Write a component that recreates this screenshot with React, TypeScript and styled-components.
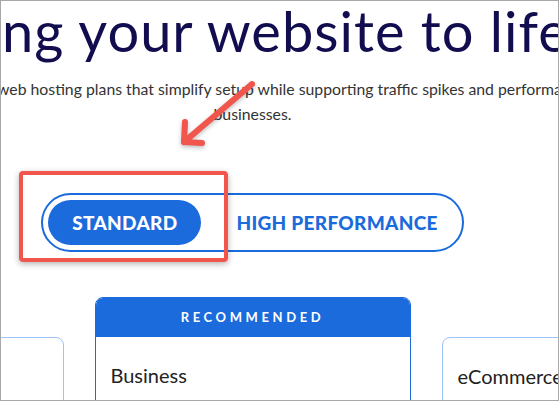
import React from "react";
import styled, { createGlobalStyle } from "styled-components";

const GlobalStyle = createGlobalStyle`
  * { box-sizing: border-box; }
  body {
    margin: 0;
    background: #fff;
    font-family: Lato, "Noto Sans", sans-serif;
  }
`;

const Frame = styled.div`
  position: relative;
  width: 559px;
  height: 401px;
  border: 1px solid #a8a8a8;
  overflow: hidden;
  background: #fff;
`;

const Column = styled.div`
  width: 503px;
  display: flex;
  flex-direction: column;
  align-items: center;
`;

const Heading = styled.h1`
  align-self: flex-start;
  margin: 0 0 0 1px;
  font-family: Lato, sans-serif;
  font-weight: 400;
  font-size: 56px;
  letter-spacing: 1px;
  line-height: 60px;
  color: #110d4e;
  white-space: nowrap;
`;

const Subtitle = styled.div`
  align-self: stretch;
  margin-top: 15px;
  font-family: Lato, sans-serif;
  font-size: 15.8px;
  line-height: 25px;
  color: #333;
  display: flex;
  flex-direction: column;
`;

const SubLine = styled.span<{ $centered?: boolean }>`
  white-space: nowrap;
  margin-left: ${({ $centered }) => ($centered ? "0" : "-4px")};
  text-align: ${({ $centered }) => ($centered ? "center" : "left")};
`;

const Toggle = styled.div`
  margin-top: 67px;
  display: flex;
  align-items: center;
  padding: 5px;
  border: 2px solid #1b6bdc;
  border-radius: 30px;
`;

const ToggleButton = styled.div<{ $active?: boolean }>`
  height: 45px;
  display: flex;
  align-items: center;
  border-radius: 23px;
  padding: ${({ $active }) => ($active ? "0 24px" : "0 19px 0 35px")};
  background: ${({ $active }) => ($active ? "#1b6bdc" : "transparent")};
  color: ${({ $active }) => ($active ? "#fff" : "#1b6bdc")};
  font-family: Lato, sans-serif;
  font-weight: 900;
  font-size: 19px;
  letter-spacing: 0.3px;
  white-space: nowrap;
`;

const Cards = styled.div`
  margin-top: 45px;
  display: flex;
  align-items: flex-start;
  gap: 31px;
`;

const Card = styled.div<{ $featured?: boolean }>`
  flex: 0 0 316px;
  margin-top: ${({ $featured }) => ($featured ? "0" : "40px")};
  height: 140px;
  display: flex;
  flex-direction: column;
  border: 1px solid ${({ $featured }) => ($featured ? "#1b6bdc" : "#9cc4f6")};
  border-radius: 8px;
  overflow: hidden;
`;

const CardBanner = styled.div`
  height: 40px;
  margin: -1px -1px 0;
  display: flex;
  align-items: center;
  justify-content: center;
  background: #1b6bdc;
  color: #fff;
  font-family: Lato, sans-serif;
  font-weight: 700;
  font-size: 13px;
  letter-spacing: 3.6px;
`;

const CardTitle = styled.div`
  padding: 26px 15px 0;
  font-family: Lato, sans-serif;
  font-size: 20px;
  line-height: 24px;
  color: #222;
  white-space: nowrap;
`;

const Highlight = styled.div`
  position: absolute;
  left: 18px;
  top: 170px;
  width: 209px;
  height: 91px;
  border: 4px solid #f0564c;
  border-radius: 4px;
  box-shadow: 0 2px 6px rgba(0, 0, 0, 0.3);
  pointer-events: none;
`;

const ArrowLayer = styled.svg`
  position: absolute;
  left: 0;
  top: 0;
  pointer-events: none;
  filter: drop-shadow(0 2px 2px rgba(0, 0, 0, 0.25));
`;

const Arrow: React.FC = () => (
  <ArrowLayer width={558} height={401} viewBox="0 0 558 401">
    <g stroke="#f0564c" strokeWidth={6} strokeLinecap="round" strokeLinejoin="round" fill="none">
      <line x1={251} y1={83} x2={183} y2={141} />
      <polyline points="184,121 183,141 201,142" />
    </g>
  </ArrowLayer>
);

export default function App() {
  return (
    <Frame>
      <GlobalStyle />
      <Column>
        <Heading>ng your website to life</Heading>
        <Subtitle>
          <SubLine>web hosting plans that simplify setup while supporting traffic spikes and performance needs of growing</SubLine>
          <SubLine $centered>businesses.</SubLine>
        </Subtitle>
        <Toggle>
          <ToggleButton $active>STANDARD</ToggleButton>
          <ToggleButton>HIGH PERFORMANCE</ToggleButton>
        </Toggle>
        <Cards>
          <Card>
            <CardTitle>Basic</CardTitle>
          </Card>
          <Card $featured>
            <CardBanner>RECOMMENDED</CardBanner>
            <CardTitle>Business</CardTitle>
          </Card>
          <Card>
            <CardTitle>eCommerce</CardTitle>
          </Card>
        </Cards>
      </Column>
      <Highlight />
      <Arrow />
    </Frame>
  );
}
